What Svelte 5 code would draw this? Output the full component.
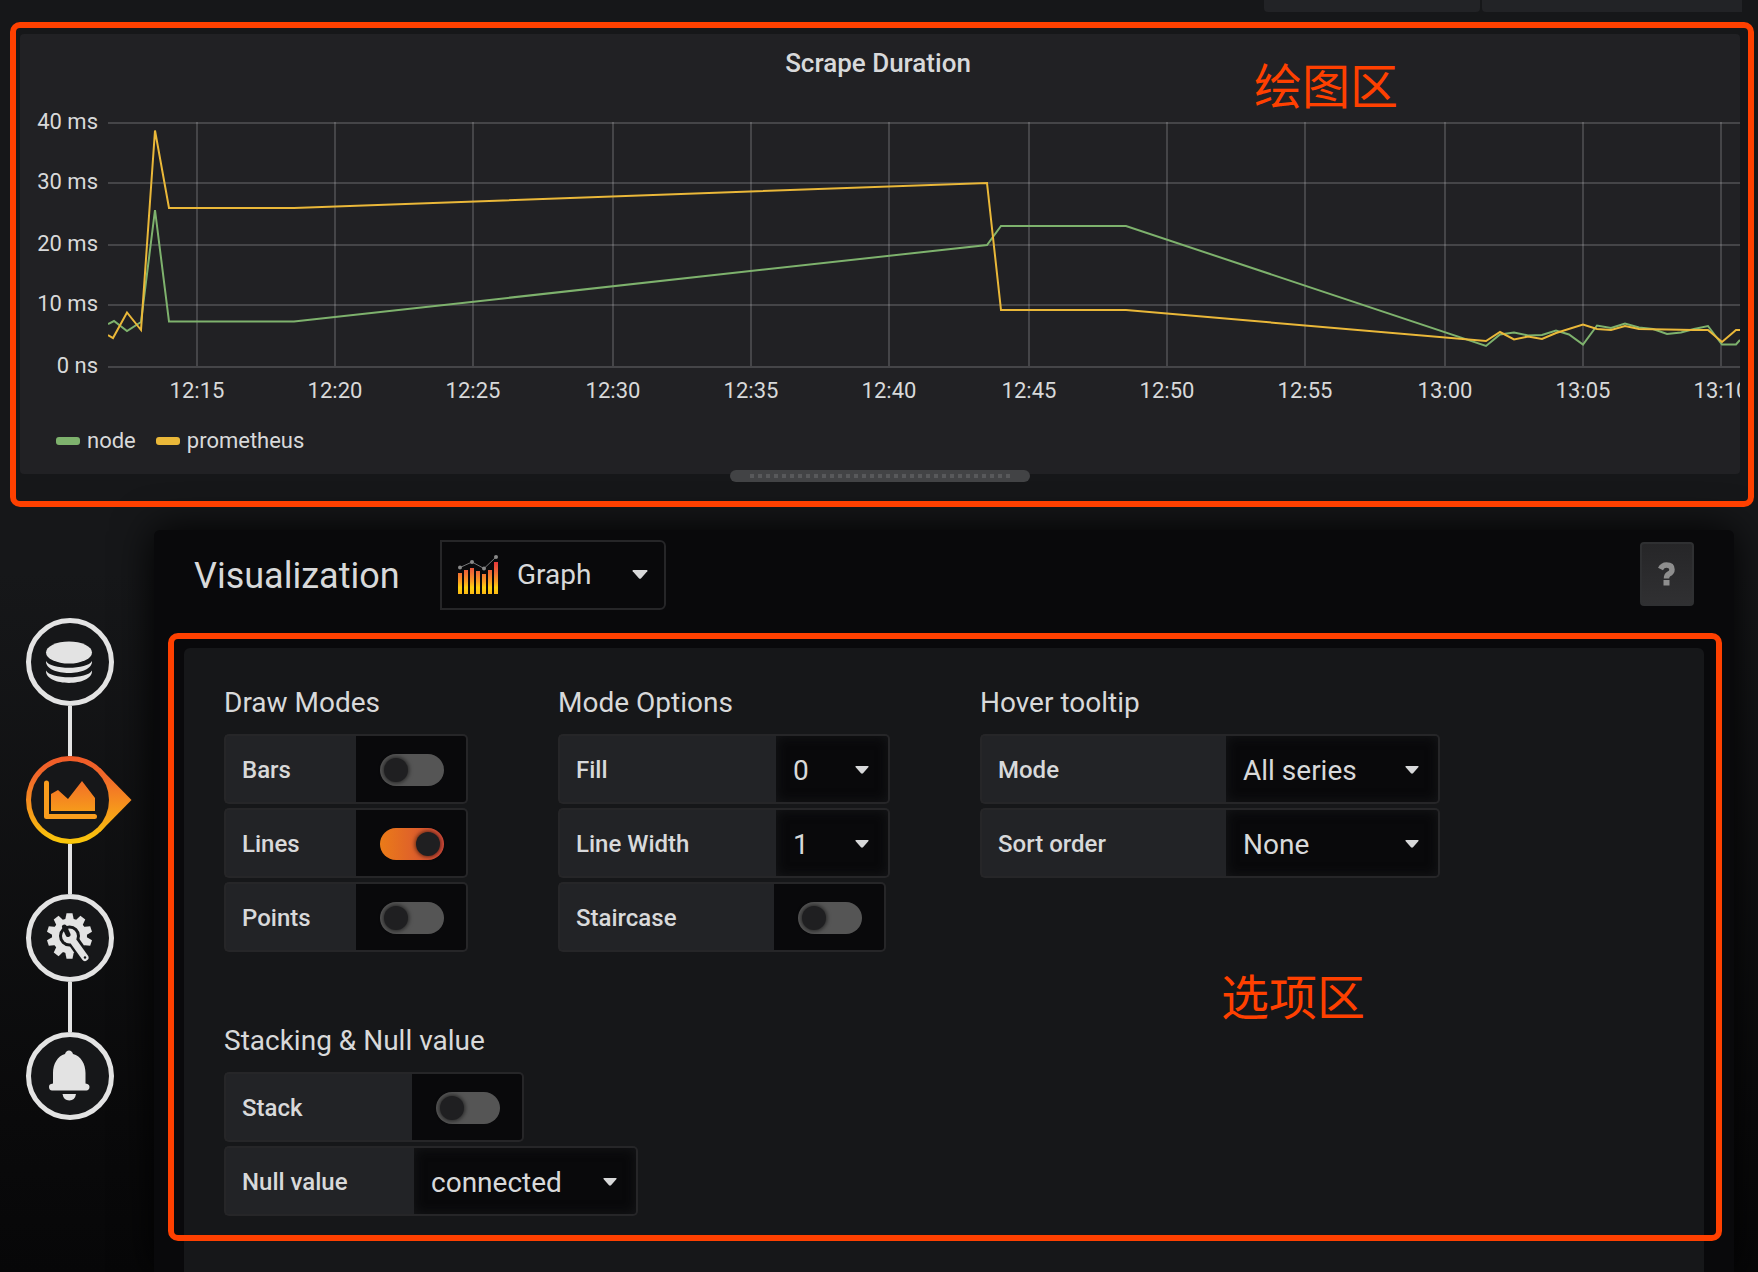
<script lang="ts">
  type Point = [number, number];

  const plotWidth = 1632;
  const plotHeight = 246;

  const yTicks = [
    { label: '40 ms', at: 1 },
    { label: '30 ms', at: 61 },
    { label: '20 ms', at: 123 },
    { label: '10 ms', at: 183 },
    { label: '0 ns', at: 245 },
  ];

  const xTicks = [
    { label: '12:15', at: 89 },
    { label: '12:20', at: 227 },
    { label: '12:25', at: 365 },
    { label: '12:30', at: 505 },
    { label: '12:35', at: 643 },
    { label: '12:40', at: 781 },
    { label: '12:45', at: 921 },
    { label: '12:50', at: 1059 },
    { label: '12:55', at: 1197 },
    { label: '13:00', at: 1337 },
    { label: '13:05', at: 1475 },
    { label: '13:10', at: 1613 },
  ];

  const series: { name: string; color: string; points: Point[] }[] = [
    {
      name: 'node',
      color: '#7eb26d',
      points: [
        [0, 202], [6, 199], [19, 209], [33, 200], [47, 88], [61, 199.5], [186, 199.5],
        [879, 123], [893, 104], [1018, 104], [1378, 224], [1392, 212.5], [1406, 210.5],
        [1420, 213.5], [1434, 213], [1448, 208.5], [1461, 212.5], [1475, 222.5], [1489, 203.5],
        [1503, 206], [1517, 201.5], [1531, 205.5], [1545, 207], [1559, 212], [1573, 210.5],
        [1586, 207], [1600, 204], [1614, 222.5], [1628, 222.5], [1632, 218],
      ],
    },
    {
      name: 'prometheus',
      color: '#eab839',
      points: [
        [0, 213], [5, 216], [19, 190.5], [33, 208], [47, 8.5], [61, 86], [186, 86],
        [879, 61], [893, 188], [1018, 188], [1378, 219], [1392, 210], [1406, 217.5],
        [1420, 214.5], [1434, 217], [1448, 211], [1475, 202.5], [1489, 207], [1503, 208],
        [1517, 204], [1531, 207], [1586, 208], [1600, 208], [1614, 220], [1628, 208], [1632, 208],
      ],
    },
  ];

  const path = (points: Point[]) => points.map((p) => p.join(',')).join(' ');

  let drawModes = $state([
    { label: 'Bars', on: false },
    { label: 'Lines', on: true },
    { label: 'Points', on: false },
  ]);
  let staircase = $state(false);
  let stack = $state(false);

  const teeth = [0, 36, 72, 108, 180, 216, 252, 288, 324];
</script>

{#snippet track()}
  <span class="track"><span class="knob"></span></span>
{/snippet}

{#snippet caret()}
  <svg class="caret" viewBox="0 0 14 8" aria-hidden="true"><path d="M1 0h12q1 0 .5 1L8 7.300q-1 .9-2 0L.5 1Q0 0 1 0z" /></svg>
{/snippet}

<div class="page">
  <div class="topbar"><button class="tab first" aria-label="Time range"></button><button class="tab" aria-label="Refresh"></button></div>

  <div class="drawing-area">
    <section class="panel">
      <h2>Scrape Duration</h2>
      <div class="chart">
        <div class="y-axis">
          {#each yTicks as t}
            <span style:top="{(t.at / plotHeight) * 100}%">{t.label}</span>
          {/each}
        </div>
        <div class="plot">
          <svg viewBox="0 0 {plotWidth} {plotHeight}" preserveAspectRatio="none" aria-label="Scrape duration over time">
            <g class="grid">
              {#each yTicks as t}<line x1="0" x2={plotWidth} y1={t.at} y2={t.at} />{/each}
              {#each xTicks as t}<line x1={t.at} x2={t.at} y1="0" y2={plotHeight - 2} />{/each}
            </g>
            {#each series as s}
              <polyline points={path(s.points)} stroke={s.color} />
            {/each}
          </svg>
          <div class="x-axis">
            {#each xTicks as t}
              <span style:left="{(t.at / plotWidth) * 100}%">{t.label}</span>
            {/each}
          </div>
        </div>
      </div>
      <div class="legend">
        {#each series as s}
          <span class="entry"><i style:background={s.color}></i>{s.name}</span>
        {/each}
      </div>
    </section>
    <div class="resize"><i></i></div>
    <span class="note note-draw">绘图区</span>
  </div>

  <div class="editor">
    <nav>
      <button class="step" aria-label="Queries">
        <svg viewBox="0 0 88 88">
          <circle cx="44" cy="44" r="41.500" />
          <ellipse class="solid" cx="43" cy="34.500" rx="23" ry="11" />
          <path class="solid" d="M20 43C24 52 62 52 66 43C67 59 19 59 20 43zM20 52.500C24 61.500 62 61.500 66 52.500C67 69 19 69 20 52.500z" />
        </svg>
      </button>
      <button class="step active" aria-label="Visualization">
        <svg viewBox="0 0 88 88">
          <defs>
            <linearGradient id="flame" gradientUnits="userSpaceOnUse" x1="0" y1="0" x2="0" y2="88">
              <stop offset="0" stop-color="#f05a28" />
              <stop offset=".25" stop-color="#f26a2a" />
              <stop offset="1" stop-color="#fbca0a" />
            </linearGradient>
          </defs>
          <path class="flame" d="M74 12L105.500 44L74 76z" />
          <circle class="flame" cx="44" cy="44" r="44" />
          <circle class="hole" cx="44" cy="44" r="39" />
          <path class="flame" d="M25 38l7-4 10 9 14-18 13 17v13H25z" />
          <path class="axis" d="M20.500 27v33.500H68.500" />
        </svg>
      </button>
      <button class="step" aria-label="General">
        <svg viewBox="0 0 88 88">
          <circle cx="44" cy="44" r="41.500" />
          <g class="solid">
            {#each teeth as a}<path transform="rotate({a} 43.500 42)" d="M39 27l1.500-7.700h6L48 27z" />{/each}
          </g>
          <circle class="gear" cx="43.500" cy="42" r="14" />
          <path class="cut" d="M44 42L60 65" />
          <path class="wrench" d="M45 44L59 63.500" />
          <circle class="solid" cx="43.500" cy="42" r="7.500" />
          <path class="bite" d="M38.500 33l3.500 7.500" />
          <circle class="hole" cx="59" cy="63.500" r="1.200" />
        </svg>
      </button>
      <button class="step" aria-label="Alert">
        <svg viewBox="0 0 88 88">
          <circle cx="44" cy="44" r="41.500" />
          <path class="solid" d="M43 18.500q3 0 4 3.500C55 24 59.500 32 59.500 41v10.500c3 .5 4 1.500 4 3.500s-1.500 3.500-3 3.500H26c-1.500 0-3-1-3-3.500s1-3 4-3.500V41c0-9 4.500-17 12-19Q40 18.500 43 18.500zM36.500 62h13.500q-1 6.500-6.700 6.500T36.500 62z" />
        </svg>
      </button>
    </nav>

    <main>
      <header>
        <h1>Visualization</h1>
        <button class="viz-picker">
          <svg class="viz-icon" viewBox="0 0 42 40" aria-hidden="true">
            <defs>
              <linearGradient id="bars" gradientUnits="userSpaceOnUse" x1="0" y1="40" x2="0" y2="8">
                <stop offset="0" stop-color="#fcb814" />
                <stop offset=".2" stop-color="#fdd00f" />
                <stop offset=".4" stop-color="#f99b22" />
                <stop offset=".7" stop-color="#ee6636" />
                <stop offset="1" stop-color="#e8383b" />
              </linearGradient>
            </defs>
            <path fill="url(#bars)" d="M1 19h4v21h-4zM7 16h4v24h-4zM13 14h4v26h-4zM19 17h4v23h-4zM25 20h4v20h-4zM31 16h4v24h-4zM37 8h4v32h-4z" />
            <path class="trend" d="M3 13.500L15 8L27 14.500L39 3" />
            <g class="dots"><circle cx="3" cy="13.500" r="2" /><circle cx="15" cy="8" r="2" /><circle cx="27" cy="14.500" r="2" /><circle cx="39" cy="3" r="2" /></g>
          </svg>
          <span>Graph</span>
          {@render caret()}
        </button>
        <button class="help" aria-label="Help">
          <svg viewBox="0 0 18 24" aria-hidden="true"><path class="hook" d="M2.500 7Q4.500 3 8.500 3q5.500 0 5.500 4.500 0 3-3.200 4.500-2.300 1.200-2.300 4.500" /><path class="dot" d="M5.500 18h6v5.500h-6z" /></svg>
        </button>
      </header>

      <div class="options">
        <section>
          <h3>Draw Modes</h3>
          {#each drawModes as m (m.label)}
            <label class="row"><span class="name w-132">{m.label}</span><span class="switch"><input type="checkbox" bind:checked={m.on} />{@render track()}</span></label>
          {/each}
        </section>

        <section>
          <h3>Mode Options</h3>
          <div class="row">
            <label class="name w-218" for="fill">Fill</label>
            <div class="select w-114"><select id="fill"><option>0</option><option>1</option><option>2</option></select>{@render caret()}</div>
          </div>
          <div class="row">
            <label class="name w-218" for="line-width">Line Width</label>
            <div class="select w-114"><select id="line-width"><option>1</option><option>2</option><option>3</option></select>{@render caret()}</div>
          </div>
          <label class="row"><span class="name w-216">Staircase</span><span class="switch"><input type="checkbox" bind:checked={staircase} />{@render track()}</span></label>
        </section>

        <section>
          <h3>Hover tooltip</h3>
          <div class="row">
            <label class="name w-246" for="mode">Mode</label>
            <div class="select w-214"><select id="mode"><option>All series</option><option>Single</option></select>{@render caret()}</div>
          </div>
          <div class="row">
            <label class="name w-246" for="sort">Sort order</label>
            <div class="select w-214"><select id="sort"><option>None</option><option>Increasing</option><option>Decreasing</option></select>{@render caret()}</div>
          </div>
        </section>

        <section>
          <h3>Stacking &amp; Null value</h3>
          <label class="row"><span class="name w-188">Stack</span><span class="switch"><input type="checkbox" bind:checked={stack} />{@render track()}</span></label>
          <div class="row">
            <label class="name w-190" for="null-value">Null value</label>
            <div class="select w-224"><select id="null-value"><option>connected</option><option>null</option><option>null as zero</option></select>{@render caret()}</div>
          </div>
        </section>
      </div>
      <div class="outline"><span class="note note-options">选项区</span></div>
    </main>
  </div>
</div>

<style>
  :global(body) { background: #0a0a0b; }
  .page, .page * { box-sizing: border-box; }
  .page {
    min-height: 100vh;
    display: flex;
    flex-direction: column;
    overflow: hidden;
    background: linear-gradient(180deg, #161719 0, #161719 45%, #0a0a0b 88%, #070708 100%);
    color: #d8d9da;
    font-family: Roboto, "Noto Sans CJK SC", sans-serif;
    font-size: 24px;
  }
  h1, h2, h3 { margin: 0; font-weight: 400; }
  button, select { font: inherit; color: inherit; border: 0; padding: 0; background: none; appearance: none; }

  .topbar { display: flex; justify-content: flex-end; gap: 2px; height: 12px; padding-right: 16px; }
  .tab { width: 260px; background: #222326; border-radius: 0 0 0 4px; }
  .tab.first { width: 216px; border-radius: 0 0 4px 4px; }

  .drawing-area {
    position: relative;
    z-index: 1;
    margin: 10px 4px 0 10px;
    height: 485px;
    padding: 6px 8px 0 4px;
    border: 6px solid #ff4000;
    border-radius: 10px;
  }
  .panel { height: 440px; background: #212124; border-radius: 4px; overflow: hidden; }
  h2 { padding: 14px 4px 0 0; font-size: 26px; line-height: 30px; font-weight: 500; text-align: center; }
  .chart { display: flex; margin-top: 44px; height: 246px; font-size: 22px; line-height: 26px; }
  .y-axis { position: relative; width: 88px; }
  .y-axis span { position: absolute; right: 10px; transform: translateY(-14px); white-space: nowrap; }
  .plot { position: relative; flex: 1; }
  .plot svg { display: block; width: 100%; height: 100%; }
  .grid line { stroke: rgba(200, 200, 200, 0.22); stroke-width: 2; vector-effect: non-scaling-stroke; }
  polyline { fill: none; stroke-width: 2; vector-effect: non-scaling-stroke; }
  .x-axis span { position: absolute; top: 256px; transform: translateX(-50%); }
  .legend { display: flex; gap: 20px; padding: 59px 0 0 36px; font-size: 22px; line-height: 28px; }
  .entry { display: flex; align-items: center; gap: 7px; }
  .entry i { width: 24px; height: 8px; border-radius: 3px; }
  .resize { position: absolute; z-index: 1; left: 714px; bottom: 19px; width: 300px; height: 12px; padding: 4px 20px; border-radius: 6px; background: #424345; }
  .resize i { display: block; height: 4px; background: repeating-linear-gradient(90deg, #58595b 0 4px, transparent 4px 8px); }
  .note { position: absolute; color: #ff4000; font-size: 48px; line-height: 60px; white-space: nowrap; font-family: "Noto Sans CJK SC", sans-serif; font-weight: 400; }
  .note-draw { left: 1238px; top: 25px; }

  .editor { flex: 1; display: flex; padding-top: 23px; }
  nav { width: 154px; padding: 88px 0 0 26px; display: flex; flex-direction: column; gap: 50px; }
  .step { position: relative; z-index: 1; display: block; width: 88px; height: 88px; flex: none; }
  .step svg { display: block; width: 88px; height: 88px; overflow: visible; }
  .step + .step::before { content: ""; position: absolute; left: 42px; top: -50px; width: 4px; height: 50px; background: #e3e3e3; }
  .step circle { fill: #161719; stroke: #e3e3e3; stroke-width: 5; }
  .step .solid { fill: #e3e3e3; stroke: none; }
  .step .flame { fill: url(#flame); stroke: none; }
  .step .hole { stroke: none; }
  .axis { fill: none; stroke: #f99d1d; stroke-width: 5; stroke-linecap: round; stroke-linejoin: round; }
  .step .gear { stroke-width: 7; fill: #161719; }
  .cut { stroke: #161719; stroke-width: 12; }
  .wrench { stroke: #e3e3e3; stroke-width: 7; stroke-linecap: round; }
  .bite { stroke: #161719; stroke-width: 5; stroke-linecap: round; }

  main {
    position: relative;
    flex: 1;
    display: flex;
    flex-direction: column;
    margin-right: 24px;
    padding: 0 30px;
    background: #09090b;
    border-radius: 6px 6px 0 0;
    box-shadow: 0 0 40px #000;
  }
  header { display: flex; align-items: flex-start; height: 118px; padding: 10px 10px 0; }
  h1 { width: 246px; font-size: 36px; line-height: 72px; }
  .viz-picker { display: flex; align-items: center; width: 226px; height: 70px; padding: 0 16px 2px 15px; border: 2px solid #262628; border-radius: 0 6px 6px 0; font-size: 28px; }
  .viz-icon { width: 42px; height: 40px; margin-right: 18px; }
  .viz-picker .caret { width: 16px; height: 9px; margin-left: auto; }
  .trend { fill: none; stroke: #77787a; stroke-width: 1; }
  .dots { fill: #898989; }
  .help { margin: 2px 0 0 auto; width: 54px; height: 64px; display: grid; place-items: center; border: 2px solid #2f3032; border-radius: 4px; background: linear-gradient(180deg, #262628, #303032); }
  .help svg { width: 18px; height: 24px; }
  .hook { fill: none; stroke: #8e8e8e; stroke-width: 5.500; }
  .dot { fill: #8e8e8e; }

  .options { flex: 1; display: flex; flex-wrap: wrap; align-content: flex-start; gap: 74px 90px; padding: 40px 40px 56px; background: #161719; border-radius: 6px 6px 0 0; }
  .options section { display: flex; flex-direction: column; align-items: flex-start; gap: 4px; }
  h3 { margin-bottom: 12px; font-size: 28px; line-height: 30px; }
  .row { display: flex; height: 70px; }
  .name { display: flex; align-items: center; padding: 2px 0 0 16px; background: #222326; border: 2px solid #262628; border-right: 0; border-radius: 5px 0 0 5px; font-weight: 500; }
  .w-132 { width: 132px; }
  .w-188 { width: 188px; }
  .w-190 { width: 190px; }
  .w-216 { width: 216px; }
  .w-218 { width: 218px; }
  .w-246 { width: 246px; }
  .w-114 { width: 114px; }
  .w-214 { width: 214px; }
  .w-224 { width: 224px; }
  .switch { display: grid; place-items: center; width: 112px; padding: 2px 0 0 2px; background: #09090b; border: 2px solid #262628; border-left: 0; border-radius: 0 5px 5px 0; position: relative; }
  .switch input { position: absolute; inset: 0; width: 100%; height: 100%; margin: 0; opacity: 0; }
  .track { display: flex; width: 64px; height: 32px; padding: 4px; border-radius: 16px; background: #555; }
  .knob { width: 24px; height: 24px; border-radius: 50%; background: #1f1f21; box-shadow: 0 0 4px 1px rgba(0, 0, 0, 0.6); }
  input:checked + .track { justify-content: flex-end; background: linear-gradient(90deg, #eb7b18, #d44a3a); }
  .select { position: relative; background: #09090b; border: 2px solid #262628; border-left: 0; border-radius: 0 5px 5px 0; box-shadow: inset 0 0 12px #161719; }
  .select select { width: 100%; height: 100%; padding: 2px 0 0 17px; font-size: 28px; outline: 0; }
  .select option { background: #161719; }
  .select .caret { position: absolute; right: 19px; top: 30px; pointer-events: none; }
  .caret { width: 14px; height: 8px; fill: #d8d9da; }

  .outline { position: absolute; left: 14px; right: 12px; top: 103px; height: 608px; border: 6px solid #ff4000; border-radius: 10px; pointer-events: none; }
  .note-options { left: 1047px; top: 325px; }
</style>
